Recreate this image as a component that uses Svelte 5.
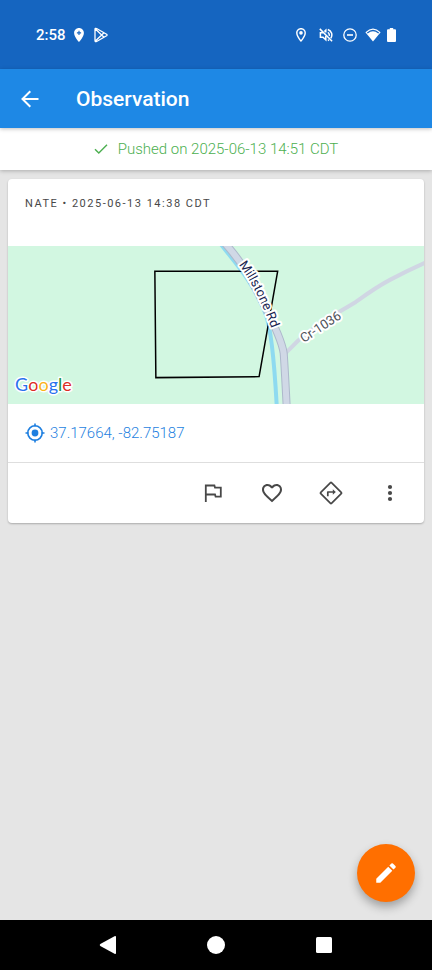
<script>
  const observation = {
    author: 'NATE',
    created: '2025-06-13 14:38 CDT',
    pushed: '2025-06-13 14:51 CDT',
    coordinates: '37.17664, -82.75187'
  };
</script>

<div class="screen">
  <div class="status">
    <div class="group left">
      <span class="clock">2:58</span>
      <svg width="10" height="14" viewBox="5 2 14 20" fill="#fff"><path fill-rule="evenodd" d="M12 2C8.1 2 5 5.1 5 9c0 5.200 7 13 7 13s7-7.800 7-13c0-3.900-3.100-7-7-7zm-.8 4h1.600v2.200H15v1.600h-2.200V12h-1.600V9.800H9V8.200h2.200z"/></svg>
      <svg class="play" width="14" height="16" viewBox="0 0 14 16" fill="none" stroke="#fff" stroke-width="1.300" stroke-linejoin="round"><path d="M2.600 1.500 12.600 7.200Q13.500 8 12.600 8.800L2.600 14.500Q1 15.200 1 13.600V2.400Q1 .8 2.600 1.500zM1.400 2l8.600 8.200M1.400 14 10 5.800"/></svg>
    </div>
    <div class="group right">
      <svg width="10" height="14" viewBox="5 2 14 20" fill="#fff"><path d="M12 2C8.100 2 5 5.100 5 9c0 5.200 7 13 7 13s7-7.800 7-13c0-3.900-3.100-7-7-7zm0 17c-2-2.600-5-7-5-10a5 5 0 0 1 10 0c0 3-3 7.400-5 10z"/><circle cx="12" cy="9" r="2.600"/></svg>
      <svg class="mute" width="14" height="14" viewBox="0 0 14 14" fill="none" stroke="#fff" stroke-width="1.500"><path d="m.8.900 12.300 12.300M8.800 1.500a5.700 5.700 0 0 1 3 8.700M8.800 4.400q1.800 1 1.500 3.500M8.800 12.500l1.300-.6"/><path d="M4 4.800H1.400v4.400H4l2.800 2.600V8M5.300 3.500l1.500-1.300V4.500"/></svg>
      <svg class="dnd" width="14" height="14" viewBox="0 0 14 14" fill="none" stroke="#fff" stroke-width="1.300"><circle cx="7" cy="7" r="6.200"/><path d="M4 7h6" stroke-width="1.600"/></svg>
      <svg class="wifi" width="16" height="14" viewBox="0 0 16 14"><path d="M8 13.500.4 4.200Q8-3.200 15.600 4.200z" fill="#fff"/><path d="M2.300 4.900q5.700-4.800 11.400 0" fill="none" stroke="#1565c0" stroke-width="1.300"/></svg>
      <svg width="9" height="14" viewBox="0 0 9 14"><path d="M2.800 0h3.400v1.300H8q1 0 1 1V13q0 1-1 1H1q-1 0-1-1V2.300q0-1 1-1h1.800z" fill="#fff"/></svg>
    </div>
  </div>

  <header>
    <button class="back" aria-label="Back">
      <svg width="18" height="18" viewBox="0 0 18 18" fill="none" stroke="#fff" stroke-width="2"><path d="M17.500 9H2M9.300 1.200 1.500 9l7.800 7.800"/></svg>
    </button>
    <h1>Observation</h1>
  </header>

  <div class="sync" role="status">
    <svg width="14" height="12" viewBox="0 0 14 12" fill="none" stroke="#4caf50" stroke-width="1.400"><path d="m1 6.300 3.800 3.800L13 1.800"/></svg>
    <span>Pushed on {observation.pushed}</span>
  </div>

  <main>
    <article>
      <p class="meta">{observation.author} • {observation.created}</p>
      <svg class="map" viewBox="0 0 415 158" preserveAspectRatio="xMidYMid slice">
        <defs><path id="millstone" d="M230 19C241 32 253 56 265 88"/></defs>
        <path d="M212-2C226 16 246 38 257 68Q264 86 268 158" fill="none" stroke="#8edaf0" stroke-width="4"/>
        <path d="M277 107 289 95C301 84 312 77 325 69L347 56C354 51 366 42 381 34Q398 25 416 17" fill="none" stroke="#d0d6e3" stroke-width="4"/>
        <path d="M216-3C234 17 242 32 255 58Q273 93 275 107Q276 120 278 160" fill="none" stroke="#adb8cb" stroke-width="8"/>
        <path d="M216-3C234 17 242 32 255 58Q273 93 275 107Q276 120 278 160" fill="none" stroke="#d0d8e6" stroke-width="6"/>
        <path d="M146.500 25.500H269L250.500 130.500 147.500 131.500z" fill="none" stroke="#000" stroke-width="1.500"/>
        <text class="label main-road"><textPath href="#millstone">Millstone Rd</textPath></text>
        <text class="label side-road" transform="translate(295 97) rotate(-33)">Cr-1036</text>
        <text class="logo" x="7" y="145"><tspan fill="#2b72ee">G</tspan><tspan fill="#dd2d25">o</tspan><tspan fill="#fbb418">o</tspan><tspan fill="#2b72ee">g</tspan><tspan fill="#20913e">l</tspan><tspan fill="#dd2d25">e</tspan></text>
      </svg>
      <a class="coords" href="#location">
        <svg width="20" height="20" viewBox="0 0 20 20" fill="none" stroke="#1e7fe0" stroke-width="1.600"><circle cx="10" cy="10" r="7.200"/><path d="M10 .5v3M10 16.500v3M.5 10h3M16.500 10h3"/><circle cx="10" cy="10" r="3.400" fill="#1e7fe0" stroke="none"/></svg>
        <span>{observation.coordinates}</span>
      </a>
      <div class="actions">
        <button aria-label="Flag"><svg width="24" height="24" viewBox="0 0 24 24" fill="none" stroke="#484848" stroke-width="1.800"><path d="M4.800 21V4.500h8.600l.6 2.200h5.800v9h-5.200l-.6-2.200H4.800"/></svg></button>
        <button aria-label="Favorite"><svg width="24" height="24" viewBox="0 0 24 24" fill="#484848"><path d="M16.500 3c-1.740 0-3.410.81-4.500 2.090C10.910 3.810 9.240 3 7.500 3 4.420 3 2 5.420 2 8.500c0 3.780 3.400 6.860 8.550 11.540L12 21.350l1.450-1.320C18.600 15.360 22 12.280 22 8.500 22 5.420 19.580 3 16.500 3zm-4.400 15.550-.1.100-.1-.1C7.140 14.240 4 11.390 4 8.500 4 6.500 5.500 5 7.500 5c1.540 0 3.040.99 3.570 2.360h1.870C13.460 5.990 14.960 5 16.500 5c2 0 3.500 1.500 3.500 3.500 0 2.890-3.140 5.740-7.900 10.050z"/></svg></button>
        <button aria-label="Directions"><svg width="24" height="24" viewBox="0 0 24 24" fill="none" stroke="#484848" stroke-width="1.700" stroke-linejoin="round"><path d="M11.300 1.800q.7-.7 1.400 0l9.500 9.500q.7.700 0 1.400l-9.500 9.500q-.7.700-1.400 0l-9.500-9.500q-.7-.7 0-1.400z"/><path d="M8.800 15.200v-4.200h5.500"/><path d="m13.800 8.300 3 2.700-3 2.700z" fill="#484848" stroke="none"/></svg></button>
        <button aria-label="More options"><svg width="24" height="24" viewBox="0 0 24 24" fill="#484848"><circle cx="12" cy="6" r="2.100"/><circle cx="12" cy="12" r="2.100"/><circle cx="12" cy="18" r="2.100"/></svg></button>
      </div>
    </article>
    <button class="fab" aria-label="Edit">
      <svg width="26" height="26" viewBox="0 0 24 24" fill="#fff"><path d="M3 17.250V21h3.750L17.810 9.940l-3.750-3.750zM20.710 7.040a1 1 0 0 0 0-1.410l-2.340-2.340a1 1 0 0 0-1.410 0l-1.830 1.830 3.750 3.750z"/></svg>
    </button>
  </main>

  <nav>
    <button aria-label="System back"><svg width="18" height="20" viewBox="0 0 18 20"><path d="M15.500 1.200Q17 .5 17 2v16q0 1.500-1.500.8L1.300 11q-1.200-1 0-2z" fill="#fff"/></svg></button>
    <button aria-label="Home"><svg width="18" height="18" viewBox="0 0 18 18"><circle cx="9" cy="9" r="9" fill="#fff"/></svg></button>
    <button aria-label="Recent apps"><svg width="16" height="16" viewBox="0 0 16 16"><rect width="16" height="16" rx="1.500" fill="#fff"/></svg></button>
  </nav>
</div>

<style>
  :global(body) { margin: 0; }
  .screen {
    min-height: 100vh;
    display: flex;
    flex-direction: column;
    background: #e5e5e5;
    font-family: Roboto, "Liberation Sans", sans-serif;
  }
  svg { display: block; flex: none; }
  button {
    display: flex;
    align-items: center;
    justify-content: center;
    padding: 0;
    border: 0;
    background: none;
    cursor: pointer;
  }
  .status {
    height: 69px;
    display: flex;
    align-items: center;
    justify-content: space-between;
    padding: 0 36px;
    background: #1565c0;
    color: #fff;
  }
  .group { display: flex; align-items: center; }
  .left { gap: 8px; }
  .clock { font-size: 15px; font-weight: 500; }
  .play { margin-left: 2px; }
  .mute { margin-left: 13px; }
  .dnd { margin-left: 10px; }
  .wifi { margin: 0 6px 0 8px; }
  header {
    height: 59px;
    display: flex;
    align-items: center;
    gap: 16px;
    background: #1e88e5;
    color: #fff;
    box-shadow: 0 1px 4px rgba(0, 0, 0, 0.25);
    z-index: 2;
  }
  .back { width: 60px; height: 48px; }
  h1 { margin: 0; font-size: 21px; font-weight: 500; }
  .sync {
    height: 42px;
    display: flex;
    align-items: center;
    justify-content: center;
    gap: 10px;
    background: #fff;
    color: #4caf50;
    font-size: 15px;
    font-weight: 300;
    box-shadow: 0 1px 4px rgba(0, 0, 0, 0.25);
    z-index: 1;
  }
  main { position: relative; flex: 1; padding: 9px 8px; }
  article {
    background: #fff;
    border-radius: 4px;
    box-shadow: 0 1px 2px rgba(0, 0, 0, 0.25);
  }
  .meta {
    margin: 0;
    padding: 17px 17px 34px;
    color: #484848;
    font-size: 11px;
    line-height: 16px;
    letter-spacing: 1.5px;
  }
  .map { width: 100%; height: 158px; background: #d2f7e1; }
  .label { paint-order: stroke; stroke: #fff; stroke-width: 4px; stroke-linejoin: round; }
  .main-road { font-size: 13px; fill: #182450; }
  .side-road { font-size: 13px; fill: #4d5158; }
  .logo {
    font-family: Lato, sans-serif;
    font-size: 18px;
    paint-order: stroke;
    stroke: #fff;
    stroke-width: 3px;
    stroke-linejoin: round;
  }
  .coords {
    height: 58px;
    display: flex;
    align-items: center;
    gap: 5px;
    padding: 0 17px;
    color: #1e7fe0;
    font-size: 15px;
    font-weight: 300;
    text-decoration: none;
  }
  .actions {
    height: 60px;
    display: flex;
    justify-content: flex-end;
    padding-right: 5px;
    border-top: 1px solid #dedede;
  }
  .actions button { width: 59px; }
  .fab {
    position: absolute;
    right: 17px;
    bottom: 18px;
    width: 58px;
    height: 58px;
    border-radius: 50%;
    background: #ff6f00;
    box-shadow: 0 5px 10px rgba(0, 0, 0, 0.3);
  }
  nav {
    height: 50px;
    display: flex;
    justify-content: center;
    gap: 60px;
    background: #000;
  }
  nav button { width: 48px; }
</style>
